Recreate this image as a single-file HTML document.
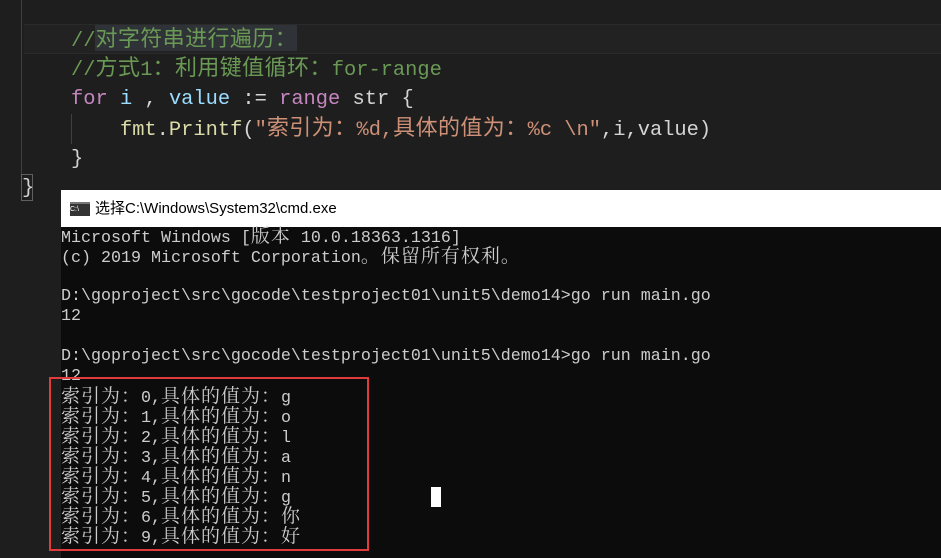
<!DOCTYPE html>
<html><head><meta charset="utf-8"><style>
body{margin:0;width:941px;height:558px;background:#1e1e1e;position:relative;overflow:hidden}
.code{position:absolute;left:71px;font-family:"Liberation Mono","Noto Sans CJK SC",monospace;font-size:20.4px;color:#d4d4d4;white-space:pre;line-height:30px;height:30px}
.code b{font-weight:normal;font-size:22px;letter-spacing:0.4px}
.cm{color:#6a9955}.kw{color:#c586c0}.v{color:#9cdcfe}.f{color:#dcdcaa}.s{color:#ce9178}
.cmd{position:absolute;left:61px;top:190px;width:880px;height:368px;background:#0c0c0c;overflow:hidden}
.title{height:37px;background:#fff;font-family:"Liberation Sans","Noto Sans CJK SC",sans-serif;font-size:15px;color:#000;line-height:37px;padding-left:34px;position:relative}
.con{position:absolute;left:0;top:37px;font-family:"Liberation Mono","Noto Serif CJK SC",monospace;font-size:16.67px;line-height:20px;color:#cccccc;white-space:pre}
.con div{height:20px}
.con b{font-weight:normal;font-size:19px;letter-spacing:1px;line-height:20px}
</style></head><body>
<div style="position:absolute;left:21px;top:0;width:1px;height:200px;background:#404040"></div>
<div style="position:absolute;left:24px;top:24px;width:917px;height:28px;border-top:1px solid #2a2a2a;border-bottom:1px solid #2a2a2a;background:#222"></div>
<div style="position:absolute;left:95px;top:25px;width:202px;height:26px;background:#2f3236"></div>
<div style="position:absolute;left:71px;top:114px;width:1px;height:30px;background:#404040"></div>
<div class="code" style="top:26px"><span class="cm">//<b>对字符串进行遍历：</b></span></div>
<div class="code" style="top:55px"><span class="cm">//<b>方式</b>1<b>：利用键值循环：</b>for-range</span></div>
<div class="code" style="top:85px"><span class="kw">for</span> <span class="v">i</span> , <span class="v">value</span> := <span class="kw">range</span> str {</div>
<div class="code" style="top:115px">    <span class="f">fmt</span>.<span class="f">Printf</span>(<span class="s">"<b>索引为：</b>%d,<b>具体的值为：</b>%c \n"</span>,i,value)</div>
<div class="code" style="top:145px">}</div>
<div class="code" style="top:174px;left:22px">}</div>
<div style="position:absolute;left:21px;top:174px;width:12px;height:27px;border:1px solid #606060;box-sizing:border-box"></div>
<div class="cmd">
<div class="title"><span style="position:absolute;left:9px;top:12px;width:20px;height:14px;background:#333;border-top:2px solid #777;box-sizing:border-box;color:#fff;font-size:7px;line-height:11px;text-align:left">C:\</span>选择C:\Windows\System32\cmd.exe</div>
<div class="con"><div>Microsoft Windows [<b>版本</b> 10.0.18363.1316]</div><div>(c) 2019 Microsoft Corporation<b>。保留所有权利。</b></div><div> </div><div>D:\goproject\src\gocode\testproject01\unit5\demo14>go run main.go</div><div>12</div><div> </div><div>D:\goproject\src\gocode\testproject01\unit5\demo14>go run main.go</div><div>12</div><div><b>索引为：</b>0,<b>具体的值为：</b>g</div><div><b>索引为：</b>1,<b>具体的值为：</b>o</div><div><b>索引为：</b>2,<b>具体的值为：</b>l</div><div><b>索引为：</b>3,<b>具体的值为：</b>a</div><div><b>索引为：</b>4,<b>具体的值为：</b>n</div><div><b>索引为：</b>5,<b>具体的值为：</b>g</div><div><b>索引为：</b>6,<b>具体的值为：你</b></div><div><b>索引为：</b>9,<b>具体的值为：好</b></div></div>
<div style="position:absolute;left:370px;top:297px;width:10px;height:20px;background:#fff"></div>
</div>
<div style="position:absolute;left:49px;top:377px;width:320px;height:174px;border:2px solid #e03c3c;box-sizing:border-box"></div>
</body></html>
